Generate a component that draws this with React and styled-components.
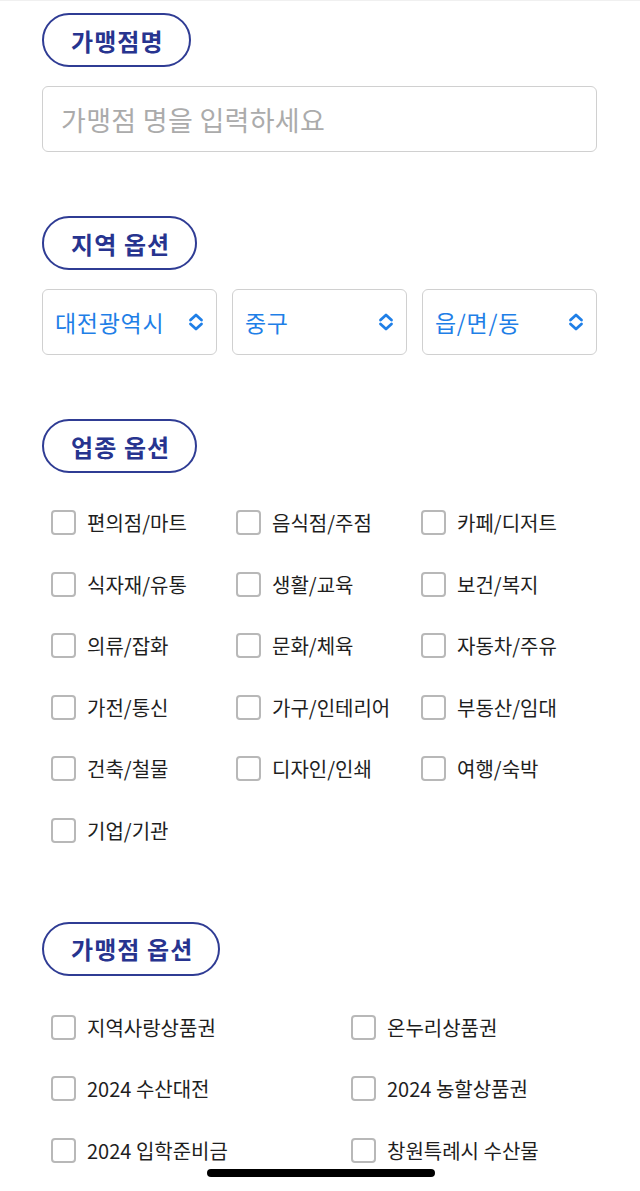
import React from 'react';
import styled, { createGlobalStyle } from 'styled-components';

const Global = createGlobalStyle`
  html, body {
    margin: 0;
    padding: 0;
    background: #ffffff;
  }
  * {
    box-sizing: border-box;
  }
  body {
    font-family: "Noto Sans CJK KR", "Noto Sans", sans-serif;
  }
`;

const Page = styled.div`
  position: relative;
  width: 640px;
  height: 1191px;
  overflow: hidden;
  padding: 12px 43px 0 42px;
  border-top: 1px solid #f0f0f0;
`;

const Section = styled.section`
  display: flex;
  flex-direction: column;
  align-items: flex-start;
  margin-top: ${p => p.top || 0}px;
`;

const Pill = styled.div`
  height: 54px;
  padding: 0 25px 0 27px;
  border: 2px solid #2f3c94;
  border-radius: 27px;
  display: flex;
  align-items: center;
  color: #27348f;
  font-size: 24px;
  font-weight: 700;
  letter-spacing: 1.1px;
`;

const Input = styled.input`
  margin-top: 19px;
  width: 555px;
  height: 66px;
  border: 1.5px solid #d0d0d0;
  border-radius: 6px;
  padding: 0 18px;
  font-family: inherit;
  font-size: 27px;
  letter-spacing: 0.3px;
  color: #333;
  outline: none;
  &::placeholder {
    color: #ababab;
  }
`;

const SelectRow = styled.div`
  margin-top: 19px;
  width: 555px;
  display: grid;
  grid-template-columns: repeat(3, 1fr);
  gap: 15px;
`;

const Select = styled.div`
  height: 66px;
  border: 1.5px solid #d0d0d0;
  border-radius: 6px;
  padding: 0 11px 0 12px;
  display: flex;
  align-items: center;
  justify-content: space-between;
  color: #1f7fe7;
  font-size: 23px;
  letter-spacing: 0.7px;
`;

const CheckGrid = styled.div`
  margin-top: ${p => p.top}px;
  margin-left: 9px;
  display: grid;
  grid-template-columns: repeat(${p => p.cols}, ${p => p.colWidth}px);
  grid-auto-rows: 25px;
  row-gap: 36.5px;
`;

const CheckItem = styled.label`
  display: flex;
  align-items: center;
  gap: 11px;
  font-size: 20px;
  letter-spacing: 0px;
  color: #1e1e1e;
  white-space: nowrap;
  line-height: 25px;
`;

const Box = styled.span`
  width: 25px;
  height: 25px;
  flex: none;
  border: 2px solid #b8b8b8;
  border-radius: 4px;
  background: #fff;
`;

const HomeBar = styled.div`
  position: absolute;
  left: 207px;
  bottom: 14px;
  width: 228px;
  height: 8px;
  border-radius: 4px;
  background: #000;
`;

const Chevrons = () => (
  <svg width="18" height="20" viewBox="0 0 18 20" fill="none">
    <path d="M3.5 8 L9 3 L14.5 8" stroke="#1f7fe7" strokeWidth="2.8" strokeLinecap="round" strokeLinejoin="round" />
    <path d="M3.5 12 L9 17 L14.5 12" stroke="#1f7fe7" strokeWidth="2.8" strokeLinecap="round" strokeLinejoin="round" />
  </svg>
);

const categories = [
  '편의점/마트', '음식점/주점', '카페/디저트',
  '식자재/유통', '생활/교육', '보건/복지',
  '의류/잡화', '문화/체육', '자동차/주유',
  '가전/통신', '가구/인테리어', '부동산/임대',
  '건축/철물', '디자인/인쇄', '여행/숙박',
  '기업/기관',
];

const storeOptions = [
  '지역사랑상품권', '온누리상품권',
  '2024 수산대전', '2024 농할상품권',
  '2024 입학준비금', '창원특례시 수산물',
];

const regions = ['대전광역시', '중구', '읍/면/동'];

export default function App() {
  return (
    <Page>
      <Global />
      <Section>
        <Pill>가맹점명</Pill>
        <Input placeholder="가맹점 명을 입력하세요" />
      </Section>

      <Section top={64}>
        <Pill>지역 옵션</Pill>
        <SelectRow>
          {regions.map(r => (
            <Select key={r}>
              <span>{r}</span>
              <Chevrons />
            </Select>
          ))}
        </SelectRow>
      </Section>

      <Section top={64}>
        <Pill>업종 옵션</Pill>
        <CheckGrid top={37} cols={3} colWidth={185}>
          {categories.map(c => (
            <CheckItem key={c}>
              <Box />
              {c}
            </CheckItem>
          ))}
        </CheckGrid>
      </Section>

      <Section top={79}>
        <Pill>가맹점 옵션</Pill>
        <CheckGrid top={39} cols={2} colWidth={300}>
          {storeOptions.map(o => (
            <CheckItem key={o}>
              <Box />
              {o}
            </CheckItem>
          ))}
        </CheckGrid>
      </Section>

      <HomeBar />
    </Page>
  );
}
